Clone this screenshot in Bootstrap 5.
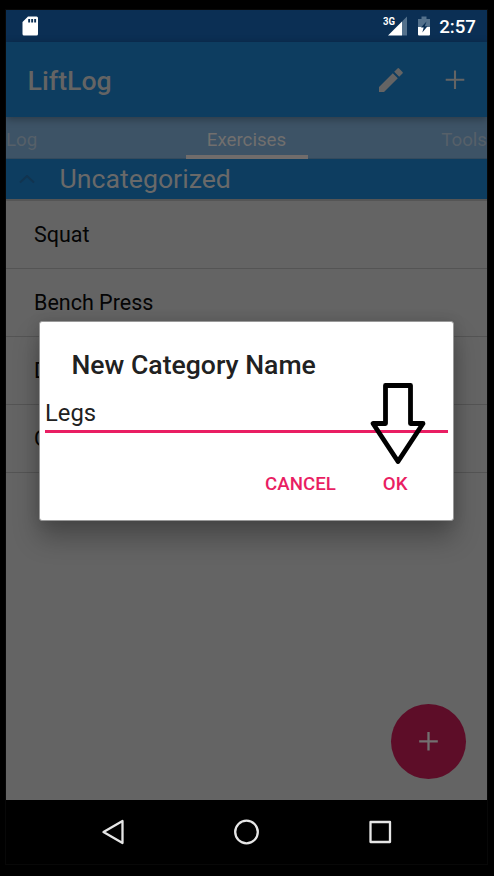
<!DOCTYPE html>
<html lang="en">
<head>
<meta charset="utf-8">
<meta name="viewport" content="width=device-width, initial-scale=1">
<title>LiftLog</title>
<link href="https://cdn.jsdelivr.net/npm/bootstrap@5.3.0/dist/css/bootstrap.min.css" rel="stylesheet">
<style>
body{background:#000;font-family:Roboto,"Liberation Sans",sans-serif;width:494px;height:876px}
svg{display:block;flex:none}
.device{width:481px;height:854px;margin:10px 0 0 6px;box-shadow:0 0 0 1px #080808}
.status{height:32px;background:#0b2f54;color:#fff;padding:0 11px 0 16px}
.clock{font-size:18.7px;font-weight:500;line-height:32px;padding-top:2px;margin-left:6px}
.appbar{height:75px;background:#0d3d60;color:#646464;padding:0 22px 0 21.500px;z-index:1;box-shadow:0 2px 8px rgba(0,0,0,.32)}
.appbar h1{font-size:26.7px;font-weight:500;line-height:75px;padding-top:4px}
.appbar .plus{margin-left:41px}
.tabs{height:42px;background:#3d5366;color:#566069;font-size:18.7px;border-bottom:1px solid #334a5d}
.tabs a{color:inherit;line-height:47px;text-decoration:none}
.tabs .current{width:122px;height:42px;color:#716f6e;border-bottom:4px solid #706c6b}
.group{height:40px;background:#0d3d60;color:#696969;font-size:26.7px;line-height:41px;padding-left:12px}
.group span{padding-left:23.500px}
.exercises{height:601px;background:#646464;color:#050505;border-top:2px solid #555}
.exercises li{height:68px;line-height:68px;padding-left:28px;font-size:21.5px;border-bottom:1px solid #545454}
.fab{width:75px;height:75px;right:21px;bottom:21px;background:#5d0d28}
.keys{height:54px;margin-top:5px}
.prompt{left:39px;top:321px;width:415px;height:200px;background:#fff;border:1px solid #999;border-radius:3px;box-shadow:0 17px 26px rgba(0,0,0,.28),0 0 14px rgba(0,0,0,.12);color:#212121}
.prompt h2{font-size:26.6px;font-weight:500;line-height:32px;margin:27px 0 0 31.500px}
.entry{font-size:23.8px;line-height:30px;height:35px;margin:17px 5px 0;border-bottom:3px solid #e91e63}
.actions{margin:37px 45.500px 0 0;gap:47px}
.actions button{border:0;background:none;padding:0;color:#e91e63;font-size:18.7px;font-weight:500;line-height:28px}
.pointer{left:368px;top:380px}
</style>
<script src="https://cdn.jsdelivr.net/npm/bootstrap@5.3.0/dist/js/bootstrap.bundle.min.js"></script>
</head>
<body class="position-relative overflow-hidden">
<main class="device d-flex flex-column overflow-hidden">
  <div class="status d-flex align-items-center">
    <svg width="17" height="20" viewBox="0 0 17 20"><path fill="#fff" fill-rule="evenodd" d="M6 .5h8.500q1.500 0 1.500 1.500v16q0 1.500-1.500 1.500H2Q.5 19.500.5 18V6zM6.200 3v3.500h1.900V3zM9.200 3v3.500h1.900V3zM12.200 3v3.500h1.900V3z"/></svg>
    <svg class="ms-auto" width="26" height="22" viewBox="0 0 26 22"><path fill="#54718c" d="M19 6.500 24 1.500v19h-5z"/><path fill="#fff" d="M5 20.500 19 6.500v14z"/><text x="0" y="9.800" font-size="11" font-weight="700" fill="#fff" textLength="12" lengthAdjust="spacingAndGlyphs">3G</text></svg>
    <svg width="16" height="20" viewBox="0 0 16 20" class="ms-2"><path fill="#54718c" d="M1 3h3.500V.5h5V3H13v8H1z"/><path fill="#fff" d="M1 11h12v7.500q0 1-1 1H2q-1 0-1-1z"/><path fill="#0b2f54" d="M9.500 5.500 4 11.500h2.700l-1.400 5 5.200-6.200H7.800z"/></svg>
    <span class="clock">2:57</span>
  </div>
  <header class="appbar d-flex align-items-center position-relative">
    <h1 class="m-0 me-auto">LiftLog</h1>
    <svg width="26" height="26" viewBox="0 0 26 26"><path fill="#646464" d="M1 20v5h5L19.800 11.200l-5-5zM16.200 4.800l5 5 3.300-3.200q.8-.8 0-1.600L21.100 1.500q-.8-.8-1.600 0z"/></svg>
    <svg class="plus" width="20" height="20" viewBox="0 0 20 20"><path stroke="#646464" stroke-width="2.100" d="M.7 9.800h18.600M10 .5v18.600"/></svg>
  </header>
  <nav class="tabs d-flex justify-content-between position-relative">
    <a href="#" class="flex-fill w-25">Log</a>
    <a href="#" class="current text-center">Exercises</a>
    <a href="#" class="flex-fill w-25 text-end">Tools</a>
  </nav>
  <div class="group d-flex">
    <svg class="mt-3" width="18" height="9" viewBox="0 0 18 9"><path d="M2 7.500 9 1l7 6.500" fill="none" stroke="#113450" stroke-width="2"/></svg>
    <span>Uncategorized</span>
  </div>
  <section class="exercises position-relative">
    <ul class="list-unstyled m-0">
      <li>Squat</li>
      <li>Bench Press</li>
      <li>D</li>
      <li>O</li>
    </ul>
    <button class="fab btn rounded-circle border-0 p-0 position-absolute d-flex align-items-center justify-content-center" aria-label="Add">
      <svg width="20" height="20" viewBox="0 0 20 20"><path stroke="#737070" stroke-width="2.300" d="M.2 9.300h18.600M9.500 0v18.600"/></svg>
    </button>
  </section>
  <footer class="keys">
    <svg width="481" height="54" viewBox="0 0 481 54" fill="none" stroke="#e6e6e6" stroke-width="2.300" stroke-linejoin="round"><path d="M97.500 27 116.500 16v22z"/><circle cx="240.500" cy="27" r="11.300"/><path d="M364.500 17h19.500v20h-19.500z"/></svg>
  </footer>
</main>
<div class="prompt position-absolute" role="dialog" aria-label="New Category Name">
  <h2>New Category Name</h2>
  <div class="entry">Legs</div>
  <div class="actions d-flex justify-content-end">
    <button>CANCEL</button>
    <button>OK</button>
  </div>
</div>
<svg class="pointer position-absolute" width="60" height="90" viewBox="0 0 60 90"><path d="M17.500 5.500h25v38H55L30 81.500 5 43.500h12.500z" fill="none" stroke="#000" stroke-width="4.800" stroke-linejoin="round"/></svg>
</body>
</html>
